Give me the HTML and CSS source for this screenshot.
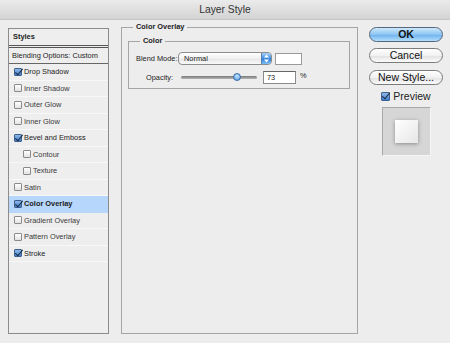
FILE: index.html
```html
<!DOCTYPE html>
<html lang="en">
<head>
    <meta charset="UTF-8">
    <title>Layer Style</title>
    <link rel="stylesheet" href="styles.css">
</head>
<body>
    <div class="titlebar">Layer Style</div>

    <div class="dialog">
        <!-- Styles list -->
        <div class="styles-list">
            <div class="list-head">Styles</div>
            <div class="list-blend">Blending Options: Custom</div>
            <div class="item checked"><span class="box"></span>Drop Shadow</div>
            <div class="item"><span class="box"></span>Inner Shadow</div>
            <div class="item"><span class="box"></span>Outer Glow</div>
            <div class="item"><span class="box"></span>Inner Glow</div>
            <div class="item checked"><span class="box"></span>Bevel and Emboss</div>
            <div class="item sub"><span class="box"></span>Contour</div>
            <div class="item sub"><span class="box"></span>Texture</div>
            <div class="item"><span class="box"></span>Satin</div>
            <div class="item checked selected"><span class="box"></span>Color Overlay</div>
            <div class="item"><span class="box"></span>Gradient Overlay</div>
            <div class="item"><span class="box"></span>Pattern Overlay</div>
            <div class="item checked"><span class="box"></span>Stroke</div>
        </div>

        <!-- Settings -->
        <fieldset class="group">
            <legend>Color Overlay</legend>
            <fieldset class="subgroup">
                <legend>Color</legend>
                <div class="field-row">
                    <span class="label">Blend Mode:</span>
                    <div class="popup">
                        <span>Normal</span>
                        <span class="stepper">
                            <svg width="5" height="9" viewBox="0 0 5 9"><path d="M2.5 0.5 L5 3.5 L0 3.5 Z M2.5 8.5 L5 5.5 L0 5.5 Z" fill="#fff"/></svg>
                        </span>
                    </div>
                    <span class="swatch"></span>
                </div>
                <div class="field-row opacity-row">
                    <span class="label">Opacity:</span>
                    <div class="slider"><span class="thumb"></span></div>
                    <span class="num-input">73</span>
                    <span class="unit">%</span>
                </div>
            </fieldset>
        </fieldset>

        <!-- Buttons -->
        <div class="actions">
            <button class="btn default">OK</button>
            <button class="btn">Cancel</button>
            <button class="btn last">New Style...</button>
            <div class="preview-check checked"><span class="box"></span>Preview</div>
            <div class="preview">
                <span class="preview-swatch"></span>
            </div>
        </div>
    </div>
</body>
</html>
```

FILE: styles.css
```css
* {
    box-sizing: border-box;
}

body {
    margin: 0;
    width: 450px;
    height: 343px;
    overflow: hidden;
    background-color: #ededed;
    font-family: "Liberation Sans", Arial, sans-serif;
    color: #222;
}

.titlebar {
    height: 20px;
    line-height: 19px;
    text-align: center;
    font-size: 10.3px;
    color: #333;
    background: linear-gradient(#ebebeb, #d3d3d3);
    border-bottom: 1px solid #c6c6c6;
}

.dialog {
    display: flex;
    align-items: flex-start;
    padding: 8px 0 0 8px;
}

/* left column */
.styles-list {
    width: 101px;
    height: 306px;
    border: 1px solid #8c8c8c;
    background-color: #eeeeee;
    font-size: 7.4px;
}

.list-head {
    height: 16px;
    line-height: 16px;
    padding-left: 4px;
    font-weight: bold;
    border-bottom: 3px double #555;
    box-sizing: content-box;
}

.list-blend {
    height: 16px;
    line-height: 15px;
    padding-left: 3px;
    border-bottom: 1px solid #666;
}

.item {
    display: flex;
    align-items: center;
    gap: 2px;
    height: 16.5px;
    padding-left: 5px;
    border-bottom: 1px solid #f8f8f8;
    color: #3a3a3a;
}

.item.checked {
    color: #1a1a1a;
}

.item.sub {
    padding-left: 14px;
}

.item.selected {
    background-color: #b6d7fb;
    font-weight: bold;
    border-bottom-color: #b6d7fb;
}

.box {
    position: relative;
    flex: none;
    width: 8px;
    height: 8px;
    border: 1px solid #8a8a8a;
    border-radius: 1px;
    background: linear-gradient(#ffffff, #e2e2e2);
}

.checked .box {
    border-color: #3d5f8c;
    background: linear-gradient(#8fb8e8, #3f7fcf);
}

.checked .box::after {
    content: "";
    position: absolute;
    left: 2px;
    top: -2px;
    width: 3px;
    height: 7px;
    border-right: 1.6px solid #1c2b40;
    border-bottom: 1.6px solid #1c2b40;
    transform: rotate(40deg);
}

/* middle group */
.group {
    width: 237px;
    height: 312px;
    margin: -6px 0 0 12px;
    padding: 4px 8px 0 6px;
    border: 1px solid #a5a5a5;
    min-width: 0;
}

.group legend,
.subgroup legend {
    padding: 0 3px;
    font-size: 7.4px;
    font-weight: bold;
    line-height: 10px;
    color: #222;
}

.group legend {
    margin-left: 5px;
}

.subgroup {
    width: 222px;
    margin: 0;
    padding: 0 6px 4px 7px;
    border: 1px solid #a5a5a5;
    min-width: 0;
}

.subgroup legend {
    margin-left: 4px;
}

.field-row {
    display: flex;
    align-items: center;
    height: 13px;
    margin-top: 6px;
    font-size: 7.4px;
}

.field-row .label {
    width: 42px;
}

.opacity-row {
    padding-left: 10px;
}

.opacity-row .label {
    width: 35px;
}

.popup {
    display: flex;
    align-items: center;
    justify-content: space-between;
    width: 94px;
    height: 13px;
    padding-left: 5px;
    border: 1px solid #8d8d8d;
    border-radius: 4px;
    background: linear-gradient(#ffffff, #f0f0f0 50%, #e4e4e4 51%, #fafafa);
    overflow: hidden;
}

.stepper {
    display: flex;
    align-items: center;
    justify-content: center;
    width: 10px;
    height: 100%;
    background: linear-gradient(#a8d2f7, #3d8de0 50%, #2a7ad6 51%, #7fc0f6);
    border-left: 1px solid #5b7fa8;
}

.swatch {
    width: 27px;
    height: 12px;
    margin-left: 3px;
    border: 1px solid #9a9a9a;
    background-color: #fff;
}

.slider {
    position: relative;
    width: 76px;
    height: 3px;
    border-radius: 2px;
    background: linear-gradient(#7a7a7a, #b5b5b5);
}

.thumb {
    position: absolute;
    left: 52px;
    top: -3px;
    width: 8px;
    height: 8px;
    border-radius: 50%;
    border: 1px solid #3a6ea8;
    background: radial-gradient(circle at 50% 35%, #c9e6ff, #4a97e4);
}

.num-input {
    width: 33px;
    height: 13px;
    margin-left: 6px;
    padding-left: 3px;
    line-height: 12px;
    border: 1px solid #8a8a8a;
    border-top-color: #666;
    background-color: #fff;
}

.unit {
    margin-left: 4px;
    align-self: flex-start;
    line-height: 9px;
}

/* right column */
.actions {
    display: flex;
    flex-direction: column;
    align-items: center;
    width: 74px;
    margin: -1px 0 0 11px;
}

.btn {
    width: 74px;
    height: 15px;
    margin: 0 0 7px;
    padding: 0;
    border: 1px solid #7b7b7b;
    border-radius: 8px;
    background: linear-gradient(#ffffff, #f1f1f1 50%, #e1e1e1 51%, #fbfbfb);
    font-family: "Liberation Sans", Arial, sans-serif;
    font-size: 10.5px;
    line-height: 13px;
    color: #111;
}

.btn.default {
    margin-bottom: 6px;
    border-color: #56677c;
    font-weight: bold;
    background: linear-gradient(#cfe8fc, #8cc5f3 50%, #6cb0ee 51%, #b3defc);
}

.btn.last {
    margin-bottom: 5px;
}

.preview-check {
    display: flex;
    align-items: center;
    gap: 3px;
    font-size: 10.5px;
    line-height: 12px;
}

.preview-check .box {
    width: 9px;
    height: 9px;
}

.preview {
    display: flex;
    align-items: center;
    justify-content: center;
    width: 49px;
    height: 49px;
    margin-top: 5px;
    background-color: #d6d6d6;
    border: 1px solid #a9a9a9;
    border-right-color: #f5f5f5;
    border-bottom-color: #f5f5f5;
}

.preview-swatch {
    width: 23px;
    height: 23px;
    background: linear-gradient(135deg, #ffffff, #e6e6e6);
    box-shadow: 0 1px 4px rgba(0, 0, 0, 0.35);
}
```
